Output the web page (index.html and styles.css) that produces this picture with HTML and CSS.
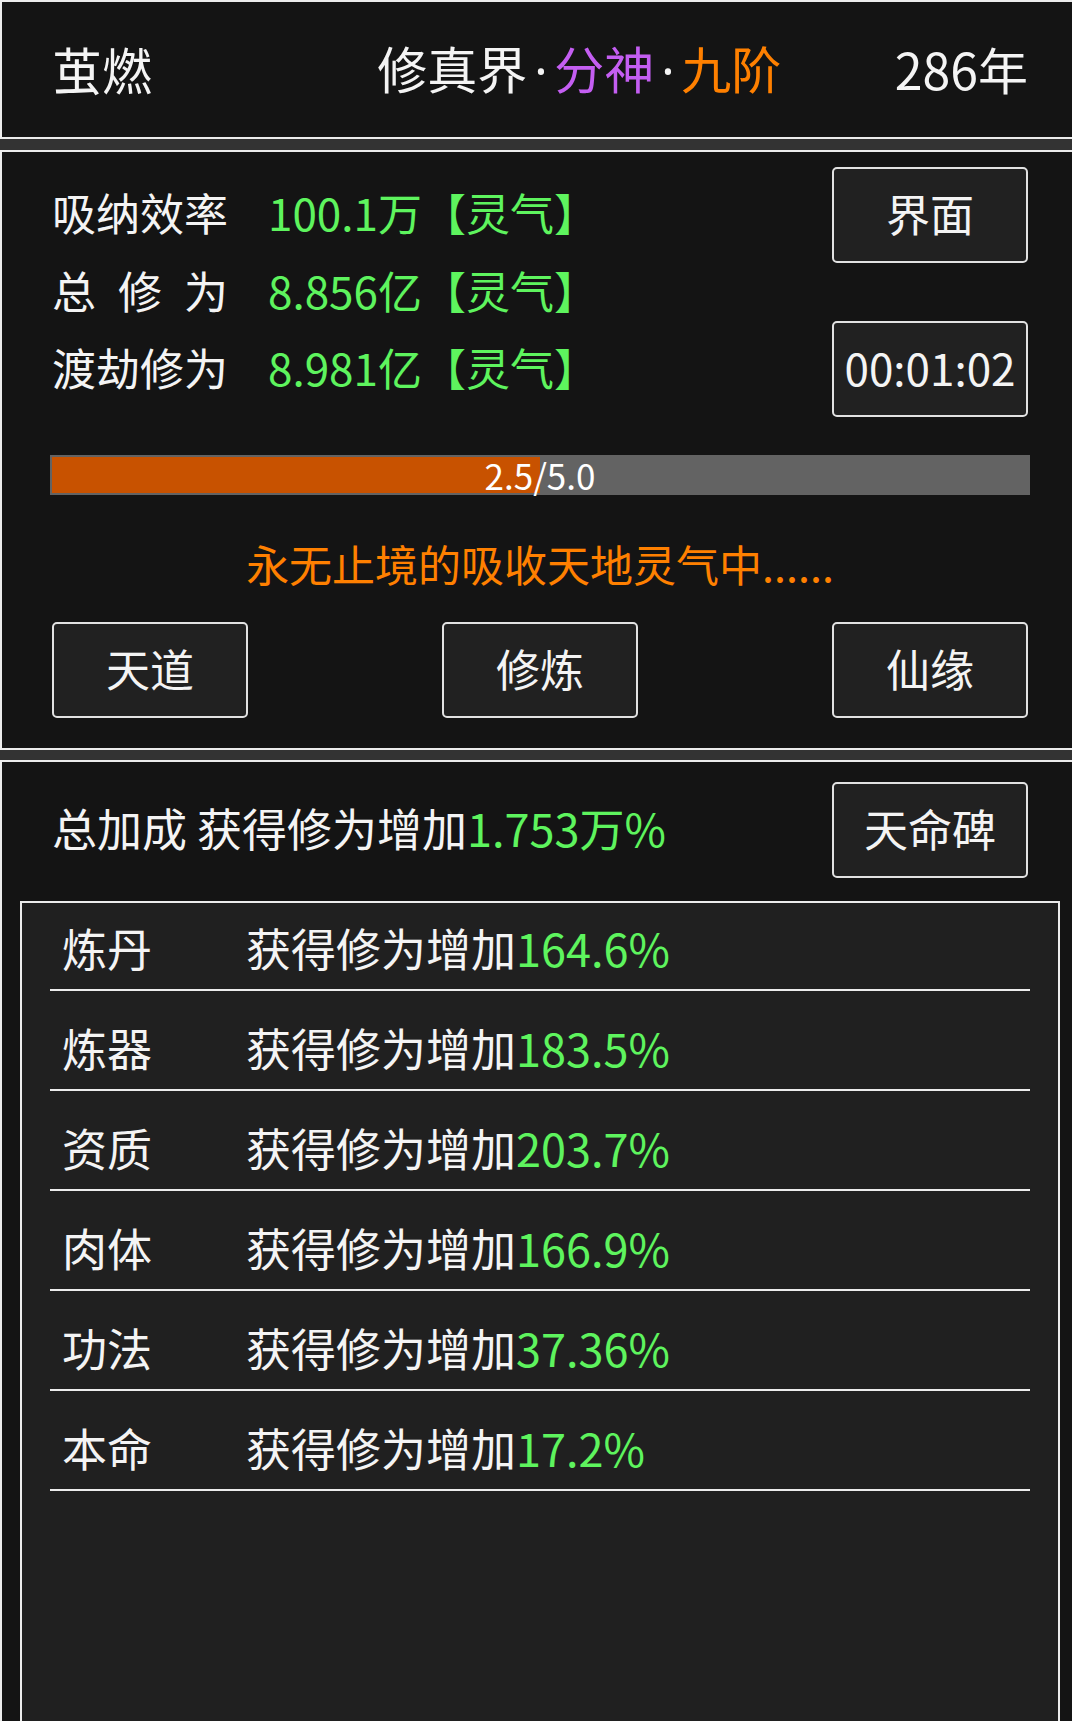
FILE: index.html
```html
<!DOCTYPE html>
<html lang="zh-CN">
<head>
<meta charset="utf-8">
<title>修真界</title>
<link rel="stylesheet" href="styles.css">
</head>
<body>
<div class="app">
  <header class="panel top">
    <div class="name">茧燃</div>
    <div class="realm">修真界<span class="dot">·</span><span class="purple">分神</span><span class="dot">·</span><span class="orange">九阶</span></div>
    <div class="age">286年</div>
  </header>

  <section class="panel cult">
    <div class="stats-area">
      <div class="stats">
        <div class="stat"><span class="label">吸纳效率</span><span class="val">100.1万【灵气】</span></div>
        <div class="stat"><span class="label">总 修 为</span><span class="val">8.856亿【灵气】</span></div>
        <div class="stat"><span class="label">渡劫修为</span><span class="val">8.981亿【灵气】</span></div>
      </div>
      <div class="side-btns">
        <button class="btn">界面</button>
        <button class="btn">00:01:02</button>
      </div>
    </div>
    <div class="bar">
      <div class="bar-fill" style="width:50%"></div>
      <span class="bar-text">2.5/5.0</span>
    </div>
    <p class="status">永无止境的吸收天地灵气中......</p>
    <div class="actions">
      <button class="btn">天道</button>
      <button class="btn">修炼</button>
      <button class="btn">仙缘</button>
    </div>
  </section>

  <section class="panel bonus">
    <div class="bonus-head">
      <div class="total">总加成 获得修为增加<span class="val">1.753万%</span></div>
      <button class="btn">天命碑</button>
    </div>
    <div class="list">
      <div class="row"><span class="row-name">炼丹</span><span>获得修为增加<span class="val">164.6%</span></span></div>
      <div class="row"><span class="row-name">炼器</span><span>获得修为增加<span class="val">183.5%</span></span></div>
      <div class="row"><span class="row-name">资质</span><span>获得修为增加<span class="val">203.7%</span></span></div>
      <div class="row"><span class="row-name">肉体</span><span>获得修为增加<span class="val">166.9%</span></span></div>
      <div class="row"><span class="row-name">功法</span><span>获得修为增加<span class="val">37.36%</span></span></div>
      <div class="row"><span class="row-name">本命</span><span>获得修为增加<span class="val">17.2%</span></span></div>
    </div>
  </section>
</div>
</body>
</html>
```

FILE: styles.css
```css
* {
  box-sizing: border-box;
}

html,
body {
  margin: 0;
  overflow: hidden;
  background: #333333;
}

body {
  font-family: "Noto Sans CJK SC", "Noto Sans", sans-serif;
  color: #f4f4f4;
}

.app {
  width: 1080px;
}

.panel {
  background: #141414;
  border: 2px solid #ececec;
  padding: 0 50px;
}

/* header */
.top {
  height: 139px;
  margin-bottom: 11px;
  padding-bottom: 3px;
  display: grid;
  grid-template-columns: repeat(3, minmax(0, 1fr));
  align-items: center;
  font-size: 50px;
  line-height: 60px;
  white-space: nowrap;
}

.dot {
  display: inline-block;
  width: 27px;
  text-align: center;
  font-family: "Noto Sans", "DejaVu Sans", sans-serif;
}

.age {
  text-align: right;
}

.purple {
  color: #c45ef2;
}

.orange {
  color: #ff8000;
}

/* cultivation panel */
.cult {
  padding-top: 15px;
  padding-bottom: 30px;
  margin-bottom: 10px;
}

.stats-area {
  display: flex;
  justify-content: space-between;
  align-items: flex-start;
}

.stats {
  margin-top: 7px;
  font-size: 44px;
  line-height: 77.5px;
  white-space: nowrap;
}

.label {
  display: inline-block;
  width: 176px;
  margin-right: 40px;
  text-align: justify;
  text-align-last: justify;
}

.val {
  color: #5ef45e;
}

.side-btns {
  display: flex;
  flex-direction: column;
  gap: 58px;
}

.btn {
  width: 196px;
  height: 96px;
  padding: 0 0 5px;
  border: 2px solid #e2e2e2;
  border-radius: 5px;
  background: #212121;
  color: #f4f4f4;
  font-family: "Noto Sans CJK SC", "Noto Sans", sans-serif;
  font-size: 44px;
  line-height: 1;
  display: flex;
  align-items: center;
  justify-content: center;
  white-space: nowrap;
}

.bar {
  margin: 38px -2px 0;
  height: 40px;
  padding: 2px;
  background: #636363;
  display: grid;
}

.bar-fill,
.bar-text {
  grid-area: 1 / 1;
}

.bar-fill {
  justify-self: start;
  height: 36px;
  background: #c85200;
}

.bar-text {
  justify-self: center;
  align-self: center;
  font-size: 35px;
  line-height: 36px;
  padding-bottom: 3px;
  color: #ffffff;
}

.status {
  margin: 38px 0 0;
  text-align: center;
  color: #ff8000;
  font-size: 43px;
  line-height: 60px;
}

.actions {
  margin-top: 29px;
  display: flex;
  justify-content: space-between;
}

/* bonus panel */
.bonus {
  padding-top: 20px;
}

.bonus-head {
  display: flex;
  justify-content: space-between;
  align-items: center;
  font-size: 45px;
  line-height: 60px;
}

.total {
  padding-bottom: 5px;
  white-space: nowrap;
}

.list {
  margin: 23px -32px 0;
  min-height: 900px;
  padding: 0 28px;
  border: 2px solid #ececec;
  background: #202020;
}

.row {
  display: flex;
  padding: 27px 0 11px;
  border-bottom: 2px solid #ececec;
  font-size: 45px;
  line-height: 60px;
  white-space: nowrap;
}

.row:first-child {
  padding-top: 15px;
}

.row-name {
  width: 196px;
  padding-left: 12px;
  flex: none;
}
```
